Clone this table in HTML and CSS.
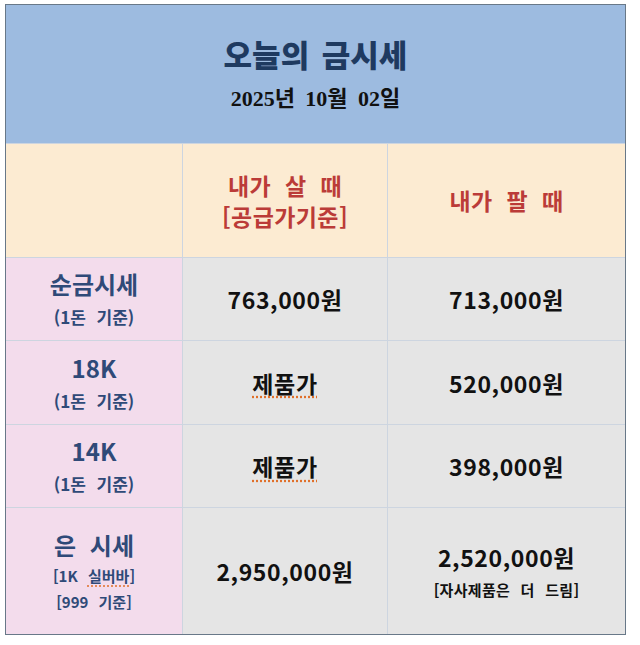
FILE: index.html
```html
<!DOCTYPE html>
<html lang="ko">
<head>
<meta charset="utf-8">
<title>오늘의 금시세</title>
<link rel="stylesheet" href="styles.css">
</head>
<body>
<div class="board">
  <div class="grid">
    <div class="cell head">
      <div class="title">오늘의 금시세</div>
      <div class="date">2025년 10월 02일</div>
    </div>

    <div class="cell cream"></div>
    <div class="cell cream col-title">
      <div>내가 살 때</div>
      <div>[공급가기준]</div>
    </div>
    <div class="cell cream col-title">
      <div>내가 팔 때</div>
    </div>

    <div class="cell label">
      <div class="big">순금시세</div>
      <div class="small">(1돈 기준)</div>
    </div>
    <div class="cell value">763,000원</div>
    <div class="cell value">713,000원</div>

    <div class="cell label">
      <div class="big">18K</div>
      <div class="small">(1돈 기준)</div>
    </div>
    <div class="cell value"><span class="spell">제품가</span></div>
    <div class="cell value">520,000원</div>

    <div class="cell label">
      <div class="big">14K</div>
      <div class="small">(1돈 기준)</div>
    </div>
    <div class="cell value"><span class="spell">제품가</span></div>
    <div class="cell value">398,000원</div>

    <div class="cell label">
      <div class="big wide">은 시세</div>
      <div class="tiny">[1K <span class="spell">실버바</span>]</div>
      <div class="tiny">[999 기준]</div>
    </div>
    <div class="cell value">2,950,000원</div>
    <div class="cell value stacked">
      <div>2,520,000원</div>
      <div class="note">[자사제품은 더 드림]</div>
    </div>
  </div>
</div>
</body>
</html>
```

FILE: styles.css
```css
html, body {
  margin: 0;
  padding: 0;
  background: #ffffff;
}

body {
  font-family: "Noto Sans CJK KR", "Noto Sans", sans-serif;
}

.board {
  margin: 4px 0 0 5px;
  width: 621px;
  box-sizing: border-box;
  border: 1px solid #687888;
  background: #cdd5e0;
}

.grid {
  display: grid;
  grid-template-columns: 176px 204px 237px;
  grid-template-rows: 138px 113px 82px 83px 82px 126px;
  gap: 1px;
}

.cell {
  display: flex;
  flex-direction: column;
  align-items: center;
  justify-content: center;
  text-align: center;
}

.head {
  grid-column: 1 / 4;
  background: #9dbbe0;
  gap: 16px;
  box-sizing: border-box;
}

.title {
  font-size: 31px;
  font-weight: 900;
  color: #1f3a60;
  line-height: 34px;
  word-spacing: 4px;
}

.date {
  font-family: "Liberation Serif", "Noto Sans CJK KR", serif;
  font-weight: 700;
  font-size: 22px;
  color: #111111;
  line-height: 24px;
  word-spacing: 5px;
}

.cream {
  background: #fcebd2;
}

.col-title {
  color: #bb3b38;
  font-weight: 700;
  font-size: 23px;
  line-height: 31px;
  word-spacing: 7px;
  letter-spacing: 0.4px;
}

.label {
  background: #f3dcec;
  color: #2f4a78;
  font-weight: 700;
}

.big {
  font-size: 24px;
  line-height: 36px;
  word-spacing: 4px;
}

.big.wide {
  word-spacing: 7px;
}

.small {
  font-size: 17px;
  line-height: 30px;
  word-spacing: 6px;
}

.tiny {
  font-size: 15px;
  line-height: 26px;
  word-spacing: 6px;
}

.value {
  background: #e5e5e5;
  color: #111111;
  font-weight: 700;
  font-size: 23px;
  letter-spacing: 0.6px;
  line-height: 30px;
}

.stacked {
  padding-top: 8px;
  box-sizing: border-box;
}

.note {
  font-size: 15px;
  letter-spacing: 0.3px;
  line-height: 36px;
  word-spacing: 6px;
}

.spell {
  text-decoration: underline dotted #e0702a;
  text-underline-offset: 4px;
}
```
